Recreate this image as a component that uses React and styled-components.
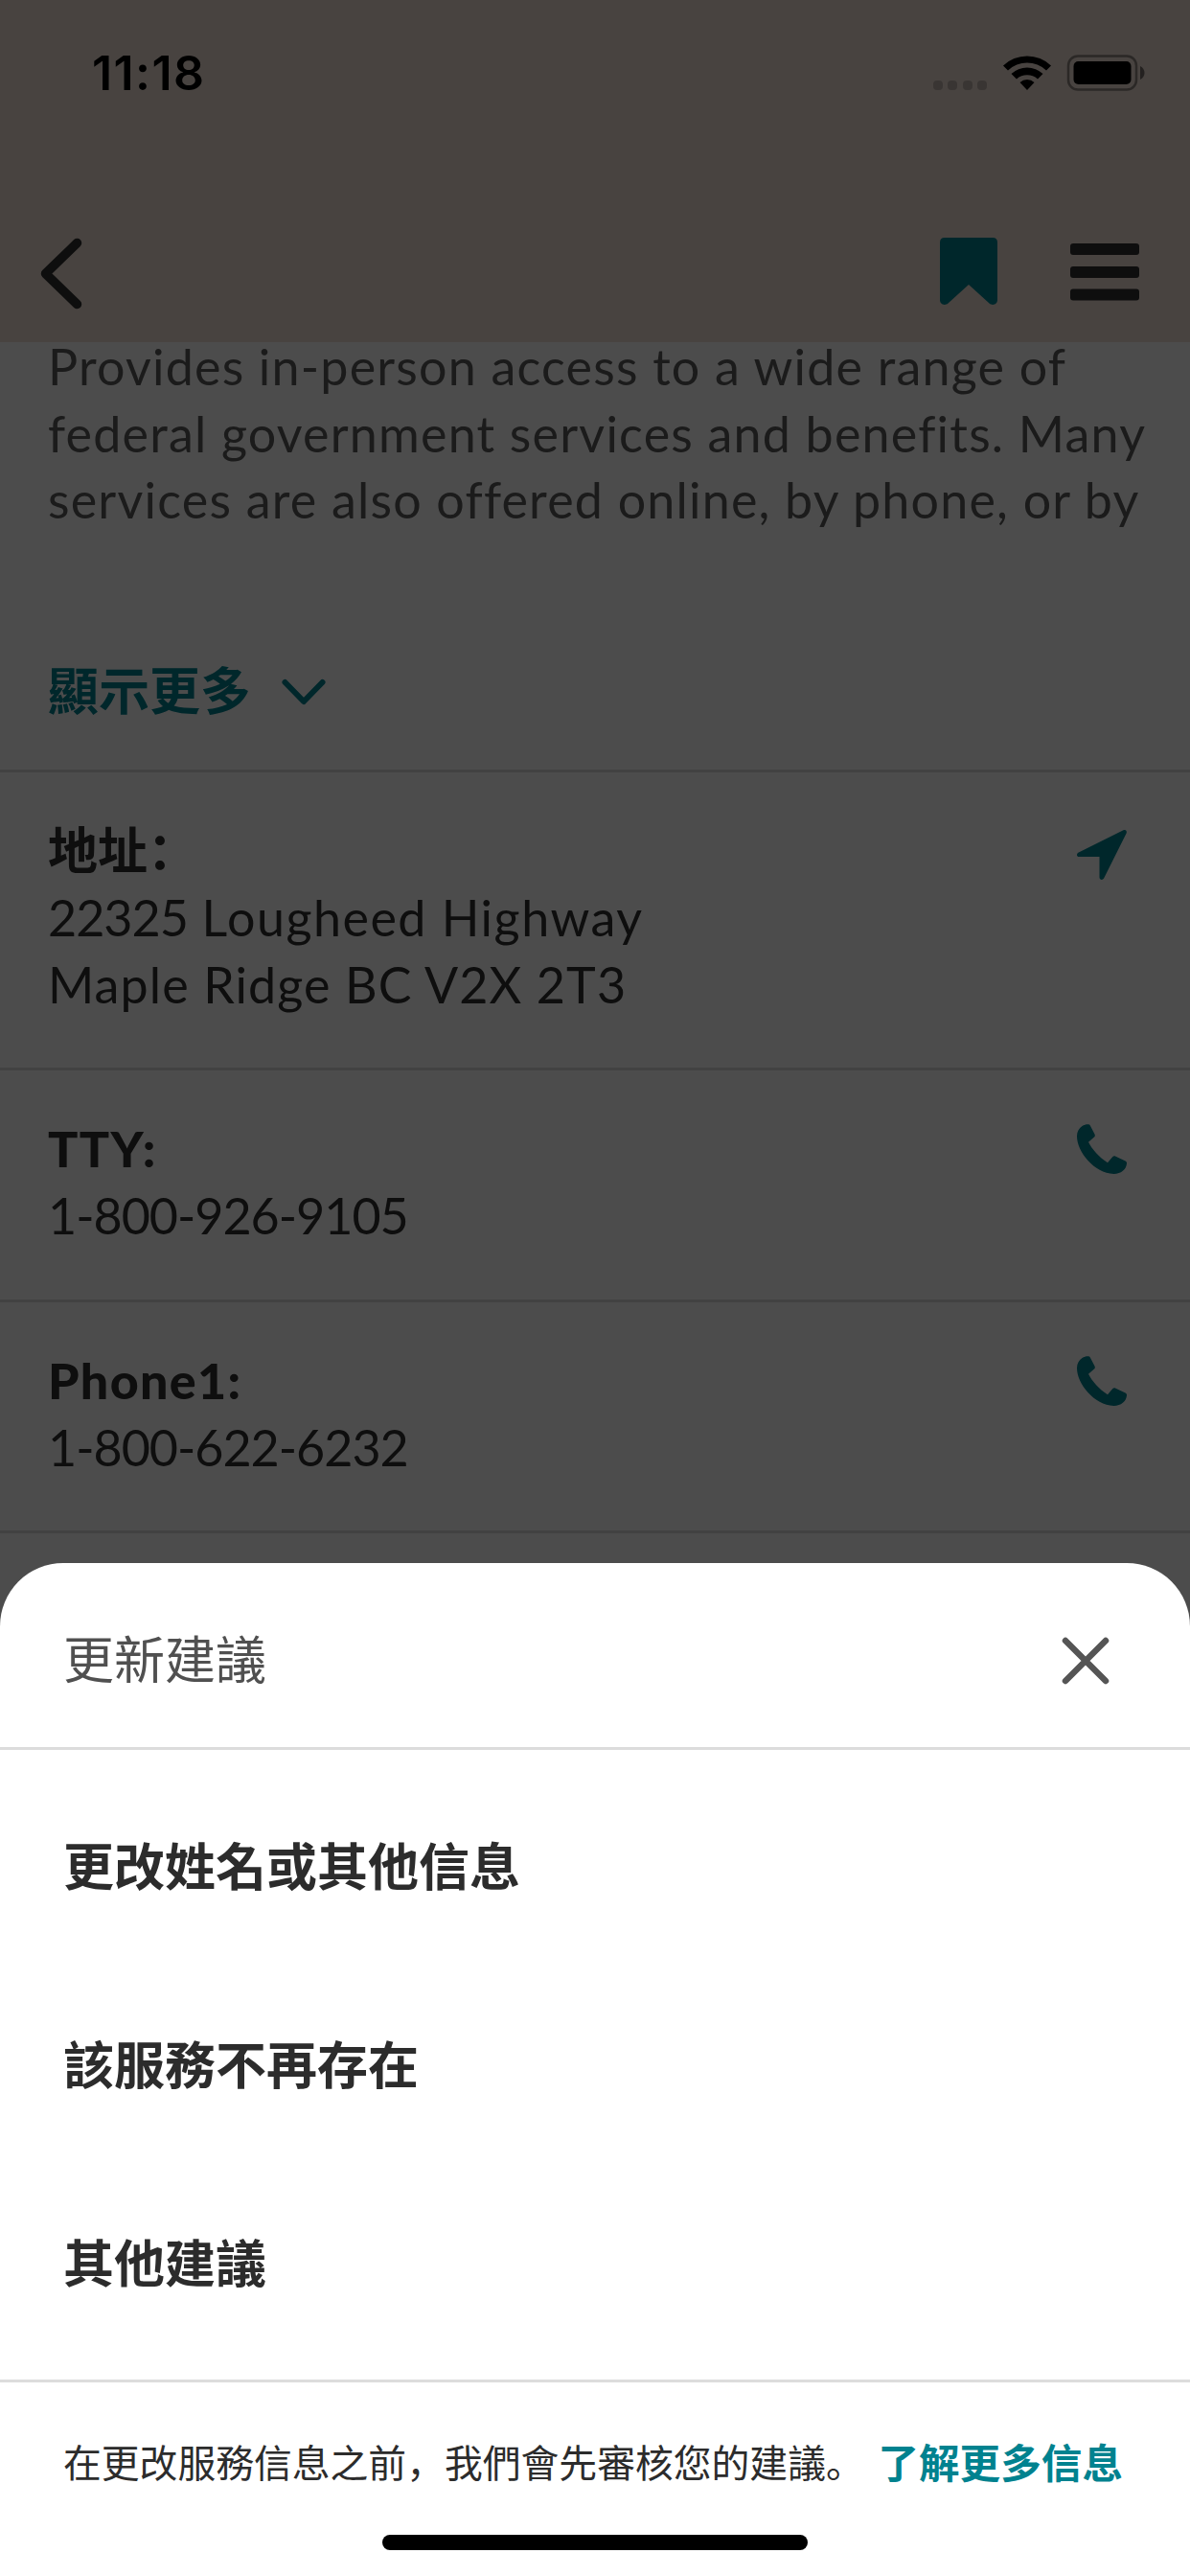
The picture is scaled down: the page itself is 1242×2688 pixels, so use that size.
import React from 'react';
import styled, { createGlobalStyle } from 'styled-components';

const latin = 'Lato, "Noto Sans CJK SC", sans-serif';

const GlobalStyle = createGlobalStyle`
  * { box-sizing: border-box; }
  body { margin: 0; background: #fff; font-family: ${latin}; }
`;

const Screen = styled.main`
  position: relative;
  width: 1242px;
  height: 2688px;
  overflow: hidden;
  background: #fff;
`;
const TopArea = styled.header`
  height: 357px;
  background: #f0e0d6;
  display: flex;
  flex-direction: column;
`;
const StatusBar = styled.div`
  height: 211px;
  padding: 51px 46px 0 96px;
  display: flex;
  align-items: flex-start;
  justify-content: space-between;
`;
const Clock = styled.time`
  font: 600 50px/50px Inter, sans-serif;
  letter-spacing: 1.4px;
  color: #000;
`;
const NavBar = styled.nav`
  height: 146px;
  padding: 0 53px 0 42px;
  display: flex;
  align-items: flex-start;
  justify-content: space-between;
`;
const NavActions = styled.div`
  display: flex;
  align-items: flex-start;
  gap: 76px;
`;
const IconButton = styled.button`
  border: 0;
  padding: 0;
  background: none;
  display: block;
  line-height: 0;
  margin-top: ${(p) => p.$top || 0}px;
`;
const Icon = styled.svg`
  display: block;
  flex: none;
  overflow: visible;
`;
const Description = styled.section`
  display: flow-root;
  height: 449px;
  padding: 0 50px;
  border-bottom: 3px solid #dcdcdc;
`;
const Summary = styled.div`
  margin-top: -9px;
  height: 209px;
`;
const Line = styled.div`
  height: ${(p) => p.$height || 70}px;
  line-height: ${(p) => p.$height || 70}px;
  font-size: 52px;
  font-weight: ${(p) => p.$weight || 400};
  color: ${(p) => p.$color || '#303030'};
  letter-spacing: ${(p) => p.$spacing || 0}px;
  white-space: nowrap;
`;
const Digits = styled.span`
  letter-spacing: -1px;
`;
const Toggle = styled.button`
  margin-top: 121px;
  padding: 0;
  border: 0;
  background: none;
  display: flex;
  align-items: center;
  gap: 32px;
  height: 80px;
  font: 700 53px/80px "Noto Sans CJK TC", sans-serif;
  color: #00828f;

  svg { margin-top: 7px; }
`;
const Detail = styled.section`
  height: ${(p) => p.$height}px;
  padding: 48px 66px 0 50px;
  border-bottom: 3px solid #dcdcdc;
  display: flex;
  align-items: flex-start;
  justify-content: space-between;
`;
const DetailText = styled.div`
  margin-top: -2px;
`;
const Scrim = styled.div`
  position: absolute;
  inset: 0;
  background: rgba(0, 0, 0, 0.7);
`;
const Sheet = styled.section`
  position: absolute;
  left: 0;
  right: 0;
  bottom: 0;
  height: 1057px;
  border-radius: 66px 66px 0 0;
  background: #fff;
  font-family: "Noto Sans CJK TC", sans-serif;
`;
const SheetHeader = styled.div`
  height: 195px;
  padding: 0 84px 0 66px;
  border-bottom: 3px solid #dcdcdc;
  display: flex;
  justify-content: space-between;
  align-items: center;
`;
const SheetTitle = styled.h2`
  margin: 3px 0 0;
  font-size: 53px;
  line-height: 80px;
  font-weight: 400;
  color: #505050;
`;
const Options = styled.div`
  height: 660px;
  padding: 16px 0 0 66px;
  border-bottom: 3px solid #dcdcdc;
`;
const Option = styled.button`
  display: block;
  height: 207px;
  padding: 0;
  border: 0;
  background: none;
  font: 700 53px/207px "Noto Sans CJK TC", sans-serif;
  color: #2c2c2c;
`;
const Footer = styled.div`
  height: 202px;
  padding: 52px 66px 0;
  display: flex;
  flex-direction: column;
`;
const Notice = styled.p`
  margin: 0;
  height: 60px;
  display: flex;
  justify-content: space-between;
  align-items: center;
  white-space: nowrap;
  font: 400 39.8px/60px "Noto Sans CJK SC", sans-serif;
  color: #2c2c2c;
`;
const Learn = styled.a`
  margin-right: 4px;
  font-size: 42.6px;
  font-weight: 700;
  color: #00828f;
`;
const HomeBar = styled.div`
  width: 444px;
  height: 16px;
  margin: 47px auto 0;
  border-radius: 8px;
  background: #000;
`;

const StatusIcons = () => (
  <Icon width="222" height="38" viewBox="974 57 222 38">
    <g fill="#000" fillOpacity=".2">
      <rect x="974" y="84" width="10" height="10" rx="4" />
      <rect x="989" y="84" width="10" height="10" rx="4" />
      <rect x="1005" y="84" width="10" height="10" rx="4" />
      <rect x="1020" y="84" width="10" height="10" rx="4" />
    </g>
    <path d="M1047 68.5a36 36 0 0 1 50 0l-5 5a29 29 0 0 0-40 0z" />
    <path d="M1055.500 77a24 24 0 0 1 33 0l-5.500 5.500a16.500 16.500 0 0 0-22 0z" />
    <path d="M1064.500 86a11 11 0 0 1 15 0l-7.500 8z" />
    <rect x="1115" y="58.500" width="71" height="35" rx="10" fill="none" stroke="#000" strokeOpacity=".4" strokeWidth="2.500" />
    <rect x="1120.500" y="64" width="60" height="24" rx="5" />
    <path d="M1190 69c6 3 6 11 0 14z" fillOpacity=".5" />
  </Icon>
);

const Phone = () => (
  <Icon width="52" height="52" viewBox="0 0 52 52" fill="#00828f">
    <path d="M5.500 2C7.500.6 10 0 12 .2c.8.1 1.400.5 1.800 1.200l4.700 9.100c.6 1.200.4 2.300-.5 3.100L12 18.800C15.500 26 23.500 35 32 40.200l5.300-6.100c.7-.8 1.700-1 2.700-.6l10.600 5.100c1 .5 1.500 1.400 1.400 2.500C51.500 47.500 46 52 38.500 52 18 51 0 29 0 12.500 0 8 2 4.200 5.500 2z" />
  </Icon>
);

const Arrow = () => (
  <Icon width="52" height="52" viewBox="0 0 52 52" fill="#00828f">
    <path d="M48.500.3 1.800 23.400C-.8 24.800-.4 28 2.200 28h21.300v21.500c0 2.700 3.300 3.400 4.600 1.100L51.600 3.500C52.600 1.300 50.700-.8 48.500.3z" />
  </Icon>
);

const summary = [
  'Provides in-person access to a wide range of',
  'federal government services and benefits. Many',
  'services are also offered online, by phone, or by',
];
const contacts = [
  { label: 'TTY:', number: '1-800-926-9105' },
  { label: 'Phone1:', number: '1-800-622-6232' },
];
const options = ['更改姓名或其他信息', '該服務不再存在', '其他建議'];

export default function App() {
  return (
    <Screen>
      <GlobalStyle />
      <TopArea>
        <StatusBar>
          <Clock>11:18</Clock>
          <IconButton as="div" $top={6}><StatusIcons /></IconButton>
        </StatusBar>
        <NavBar>
          <IconButton $top={37} aria-label="Back">
            <Icon width="44" height="75" viewBox="0 0 44 75" fill="none" stroke="#303030" strokeWidth="9.500" strokeLinecap="round" strokeLinejoin="round">
              <path d="M38.500 5.500 5.500 37.500l33 32" />
            </Icon>
          </IconButton>
          <NavActions>
            <IconButton $top={37} aria-label="Bookmark">
              <Icon width="60" height="70" viewBox="0 0 60 70" fill="#00828f">
                <path d="M5 0h50q5 0 5 5v60c0 4.500-5 6.500-8.500 3.500L30 49 8.500 68.500C5 71.500 0 69.500 0 65V5q0-5 5-5z" />
              </Icon>
            </IconButton>
            <IconButton $top={43} aria-label="Menu">
              <Icon width="72" height="60" viewBox="0 0 72 60" fill="#303030">
                <rect width="72" height="12" rx="3" />
                <rect y="24" width="72" height="12" rx="3" />
                <rect y="47.500" width="72" height="12" rx="3" />
              </Icon>
            </IconButton>
          </NavActions>
        </NavBar>
      </TopArea>
      <Description>
        <Summary>
          {summary.map((text) => (
            <Line key={text} $color="#5c5c5c" $height={69.6} $spacing={1.2}>{text}</Line>
          ))}
        </Summary>
        <Toggle>
          顯示更多
          <Icon width="46" height="26" viewBox="0 0 46 26" fill="none" stroke="#00828f" strokeWidth="6" strokeLinecap="round" strokeLinejoin="round">
            <path d="m3.500 3 19.500 20L42.500 3" />
          </Icon>
        </Toggle>
      </Description>
      <Detail $height={311}>
        <DetailText>
          <Line $weight={700}>地址：</Line>
          <Line $spacing={1.5}><Digits>22325</Digits> Lougheed Highway</Line>
          <Line $spacing={1.1}>Maple Ridge BC V2X 2T3</Line>
        </DetailText>
        <IconButton $top={12}><Arrow /></IconButton>
      </Detail>
      {contacts.map((c) => (
        <Detail key={c.label} $height={241.500}>
          <DetailText>
            <Line $weight={900} $spacing={1.3}>{c.label}</Line>
            <Line><Digits>{c.number}</Digits></Line>
          </DetailText>
          <IconButton $top={8}><Phone /></IconButton>
        </Detail>
      ))}
      <Scrim />
      <Sheet>
        <SheetHeader>
          <SheetTitle>更新建議</SheetTitle>
          <IconButton $top={12} aria-label="Close">
            <Icon width="50" height="50" viewBox="0 0 50 50" fill="none" stroke="#555" strokeWidth="6.500" strokeLinecap="round">
              <path d="m4 4 42 42M46 4 4 46" />
            </Icon>
          </IconButton>
        </SheetHeader>
        <Options>
          {options.map((o) => <Option key={o}>{o}</Option>)}
        </Options>
        <Footer>
          <Notice>
            <span>在更改服務信息之前，我們會先審核您的建議。</span>
            <Learn>了解更多信息</Learn>
          </Notice>
          <HomeBar />
        </Footer>
      </Sheet>
    </Screen>
  );
}
